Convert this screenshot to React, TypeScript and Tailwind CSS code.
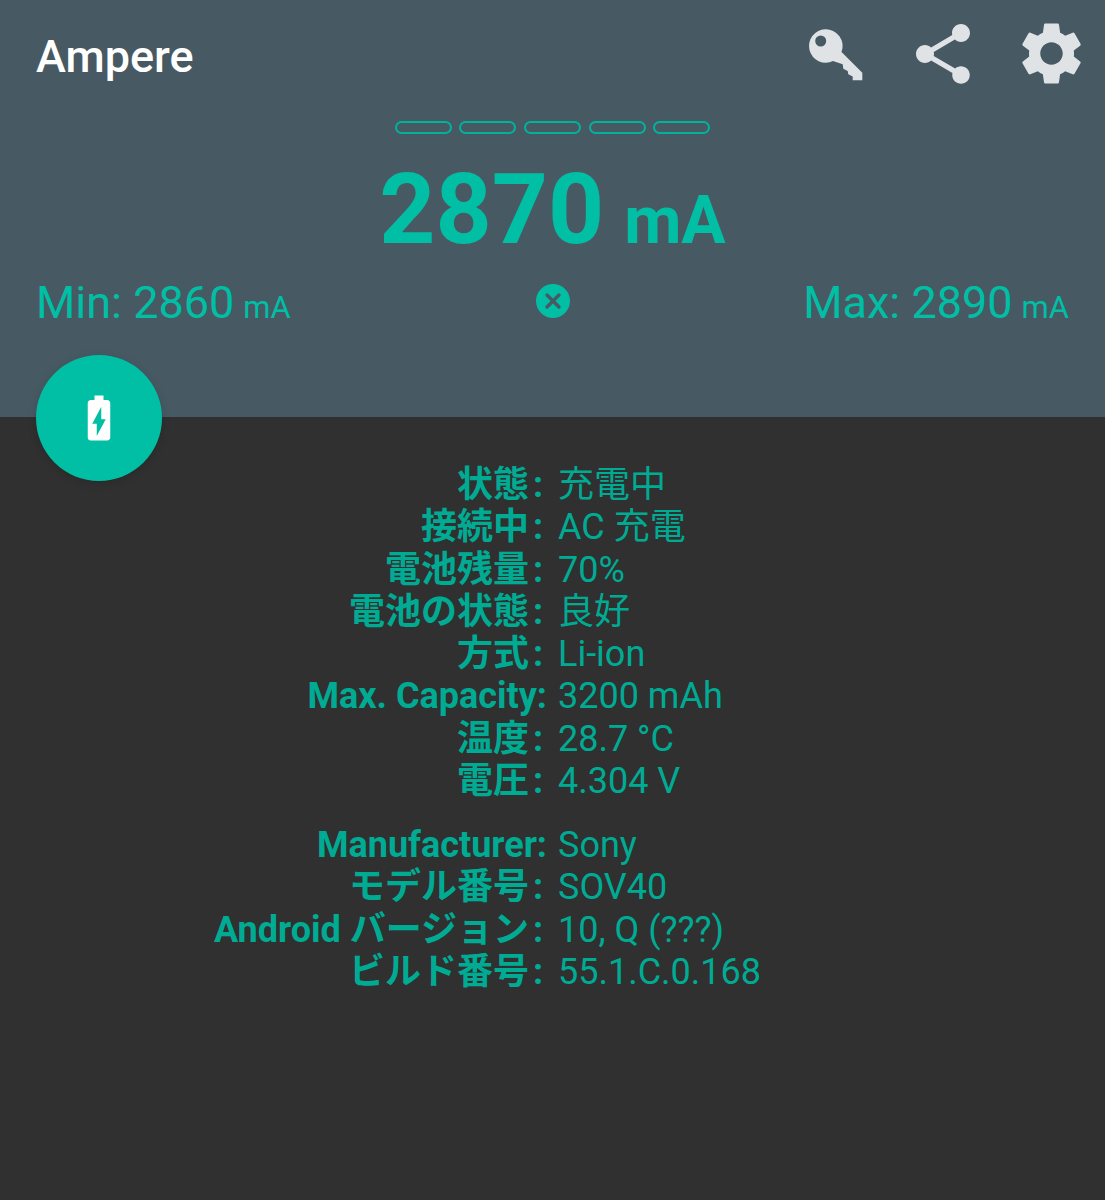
const fontStack = { fontFamily: 'Roboto, "Noto Sans CJK JP", sans-serif' }

const batteryRows = [
  ["状態", "充電中", true],
  ["接続中", "AC 充電", true],
  ["電池残量", "70%", true],
  ["電池の状態", "良好", true],
  ["方式", "Li-ion", true],
  ["Max. Capacity", "3200 mAh", false],
  ["温度", "28.7 °C", true],
  ["電圧", "4.304 V", true],
] as [string, string, boolean][]

const deviceRows = [
  ["Manufacturer", "Sony", false],
  ["モデル番号", "SOV40", true],
  ["Android バージョン", "10, Q (???)", true],
  ["ビルド番号", "55.1.C.0.168", true],
] as [string, string, boolean][]

function KeyIcon() {
  return (
    <svg viewBox="0 0 70 66" className="h-[66px] w-[70px] fill-[#dfe3e6]">
      <path
        fillRule="evenodd"
        d="M25 8.3A16.7 16.7 0 0 1 41.5 31L62.3 51.7V59.3H52.7V55.5L48.3 53.3L47.7 50L43.3 47.7L42.7 43.3L33 40A16.7 16.7 0 1 1 25 8.3ZM20.7 14.5A5.5 5.5 0 1 0 20.7 25.5A5.5 5.5 0 1 0 20.7 14.5Z"
      />
    </svg>
  )
}

function ShareIcon() {
  return (
    <svg viewBox="0 0 24 24" className="h-[72px] w-[72px] fill-[#dfe3e6]">
      <path d="M18 16.08c-.76 0-1.44.3-1.96.77L8.91 12.7c.05-.23.09-.46.09-.7s-.04-.47-.09-.7l7.05-4.11c.54.5 1.25.81 2.04.81 1.66 0 3-1.34 3-3s-1.34-3-3-3-3 1.34-3 3c0 .24.04.47.09.7L8.04 9.81C7.5 9.31 6.79 9 6 9c-1.66 0-3 1.34-3 3s1.34 3 3 3c.79 0 1.5-.31 2.04-.81l7.12 4.16c-.05.21-.08.43-.08.65 0 1.61 1.31 2.92 2.92 2.92 1.61 0 2.92-1.31 2.92-2.92s-1.31-2.92-2.92-2.92z" />
    </svg>
  )
}

function GearIcon() {
  return (
    <svg viewBox="0 0 24 24" className="h-[75px] w-[75px] fill-[#dfe3e6]">
      <path d="M19.14,12.94c0.04-0.3,0.06-0.61,0.06-0.94c0-0.32-0.02-0.64-0.07-0.94l2.03-1.58c0.18-0.14,0.23-0.41,0.12-0.61l-1.92-3.32c-0.12-0.22-0.37-0.29-0.59-0.22l-2.39,0.96c-0.5-0.38-1.03-0.7-1.62-0.94L14.4,2.81c-0.04-0.24-0.24-0.41-0.48-0.41h-3.84c-0.24,0-0.43,0.17-0.47,0.41L9.25,5.35C8.66,5.59,8.12,5.92,7.63,6.29L5.24,5.33c-0.22-0.08-0.47,0-0.59,0.22L2.74,8.87C2.62,9.08,2.66,9.34,2.86,9.48l2.03,1.58C4.84,11.36,4.8,11.69,4.8,12s0.02,0.64,0.07,0.94l-2.03,1.58c-0.18,0.14-0.23,0.41-0.12,0.61l1.92,3.32c0.12,0.22,0.37,0.29,0.59,0.22l2.39-0.96c0.5,0.38,1.03,0.7,1.62,0.94l0.36,2.54c0.05,0.24,0.24,0.41,0.48,0.41h3.84c0.24,0,0.44-0.17,0.47-0.41l0.36-2.54c0.59-0.24,1.13-0.56,1.62-0.94l2.39,0.96c0.22,0.08,0.47,0,0.59-0.22l1.92-3.32c0.12-0.22,0.07-0.47-0.12-0.61L19.14,12.94z M12,15.6c-1.98,0-3.6-1.62-3.6-3.6s1.62-3.6,3.6-3.6s3.6,1.62,3.6,3.6S13.98,15.6,12,15.6z" />
    </svg>
  )
}

function InfoRows({ rows }: { rows: [string, string, boolean][] }) {
  return (
    <div className="grid grid-cols-2 gap-x-[11px] text-[36px] leading-[42.25px] text-[#00ab94]">
      {rows.map(([label, value, cjk]) => (
        <div key={label} className="contents">
          <div className="text-right font-bold whitespace-nowrap">
            {label}
            {/* Japanese labels get a wider colon slot */}
            {cjk ? <span className="inline-block w-[18px] text-center">:</span> : ":"}
          </div>
          <div className="whitespace-nowrap">{value}</div>
        </div>
      ))}
    </div>
  )
}

export default function App() {
  return (
    <div style={fontStack} className="relative flex h-[1200px] w-[1105px] flex-col overflow-hidden bg-[#303030]">
      <header className="flex h-[417px] flex-col bg-[#475a64]">
        <div className="flex h-[107px] items-center justify-between pl-9">
          <h1 className="translate-y-[3px] text-[45px] font-medium text-white">Ampere</h1>
          <div className="flex">
            <button className="flex h-[107px] w-[108px] items-center justify-center">
              <KeyIcon />
            </button>
            <button className="flex h-[107px] w-[108px] items-center justify-center">
              <ShareIcon />
            </button>
            <button className="flex h-[107px] w-[108px] items-center justify-center">
              <GearIcon />
            </button>
          </div>
        </div>

        <div className="mt-[14px] flex justify-center gap-[7.7px]">
          {[0, 1, 2, 3, 4].map((i) => (
            <div key={i} className="h-[13px] w-[57px] rounded-full border-2 border-[#00b39c]" />
          ))}
        </div>

        <div className="mt-[17px] flex items-baseline justify-center gap-[20px] font-bold text-[#00bfa5]">
          <span className="text-[98px] leading-[118px]">2870</span>
          <span className="text-[66px] leading-[118px]">mA</span>
        </div>

        <div className="-mt-[7px] grid grid-cols-[1fr_auto_1fr] items-center px-9 text-[#00bfa5]">
          <div className="flex items-baseline gap-[9px] whitespace-nowrap">
            <span className="text-[45px] leading-[60px]">Min: 2860</span>
            <span className="text-[31px]">mA</span>
          </div>
          <svg viewBox="0 0 34 34" className="h-[34px] w-[34px] -translate-y-[2px]">
            <circle cx="17" cy="17" r="17" fill="#00bfa5" />
            <path d="M11 11 L23 23 M23 11 L11 23" stroke="#475a64" strokeWidth="3.4" strokeLinecap="round" />
          </svg>
          <div className="flex items-baseline justify-end gap-[9px] whitespace-nowrap">
            <span className="text-[45px] leading-[60px]">Max: 2890</span>
            <span className="text-[31px]">mA</span>
          </div>
        </div>
      </header>

      <button className="absolute top-[355px] left-9 flex h-[126px] w-[126px] items-center justify-center rounded-full bg-[#00bfa5] shadow-[0_2px_8px_rgba(0,0,0,0.15)]">
        <svg viewBox="0 0 24 24" className="h-[54px] w-[54px] fill-white">
          <path d="M15.67 4H14V2h-4v2H8.33C7.6 4 7 4.6 7 5.33v15.33C7 21.4 7.6 22 8.33 22h7.33c.74 0 1.34-.6 1.34-1.33V5.33C17 4.6 16.4 4 15.67 4zM11 20v-5.5H9L13 7v5.5h2L11 20z" />
        </svg>
      </button>

      <main className="flex flex-col gap-[22px] pt-[47px]">
        <InfoRows rows={batteryRows} />
        <InfoRows rows={deviceRows} />
      </main>
    </div>
  )
}
